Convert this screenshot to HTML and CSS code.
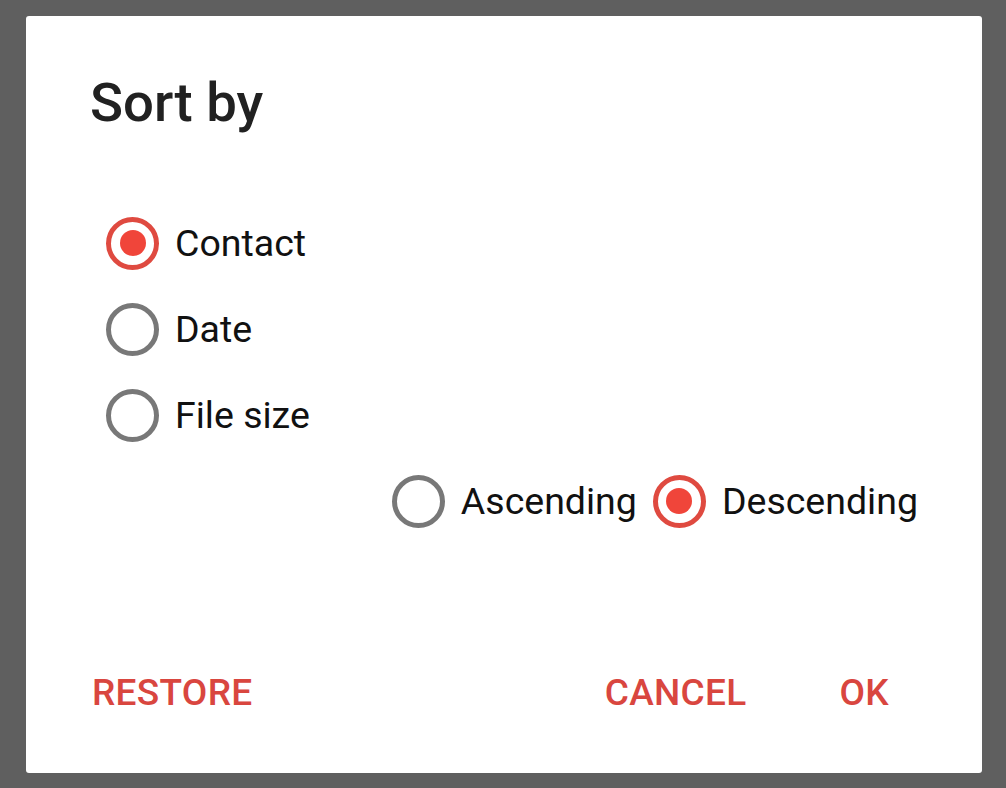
FILE: index.html
```html
<!DOCTYPE html>
<html lang="en">
<head>
    <meta charset="UTF-8">
    <meta name="viewport" content="width=device-width, initial-scale=1.0">
    <title>Sort by</title>
    <link rel="stylesheet" href="styles.css">
</head>
<body>
    <!-- Sort dialog -->
    <div class="dialog">
        <h2 class="dialog-title">Sort by</h2>

        <div class="sort-options">
            <label class="radio-row">
                <span class="radio checked"></span>
                <span class="radio-label">Contact</span>
            </label>
            <label class="radio-row">
                <span class="radio"></span>
                <span class="radio-label">Date</span>
            </label>
            <label class="radio-row">
                <span class="radio"></span>
                <span class="radio-label">File size</span>
            </label>
        </div>

        <div class="sort-order">
            <label class="radio-row">
                <span class="radio"></span>
                <span class="radio-label">Ascending</span>
            </label>
            <label class="radio-row">
                <span class="radio checked"></span>
                <span class="radio-label">Descending</span>
            </label>
        </div>

        <div class="dialog-actions">
            <button class="text-button">Restore</button>
            <div class="actions-right">
                <button class="text-button">Cancel</button>
                <button class="text-button">OK</button>
            </div>
        </div>
    </div>
</body>
</html>
```

FILE: styles.css
```css
body {
    font-family: Roboto, "Noto Sans", Arial, sans-serif;
    margin: 0;
    height: 100vh;
    background-color: #5f5f5f;
    padding: 16px 24px 15px 26px;
    box-sizing: border-box;
}
.dialog {
    background-color: #fff;
    border-radius: 3px;
    height: 757px;
    box-sizing: border-box;
    padding-top: 56px;
    display: flex;
    flex-direction: column;
}
.dialog-title {
    margin: 0;
    padding-left: 64px;
    font-size: 54.5px;
    line-height: 60px;
    font-weight: 500;
    color: #212121;
}
.sort-options {
    margin-top: 68px;
    padding-left: 80px;
    display: flex;
    flex-direction: column;
}
.radio-row {
    height: 86px;
    display: flex;
    align-items: center;
    gap: 16px;
    font-size: 37.5px;
    color: #111;
}
.radio {
    width: 53px;
    height: 53px;
    border: 5px solid #787878;
    border-radius: 50%;
    box-sizing: border-box;
    display: flex;
    align-items: center;
    justify-content: center;
}
.radio.checked {
    border-color: #df4a40;
}
.radio.checked::after {
    content: '';
    width: 26px;
    height: 26px;
    border-radius: 50%;
    background-color: #f0453a;
}
.sort-order {
    display: flex;
    justify-content: flex-end;
    gap: 16px;
    padding-right: 64px;
}
.dialog-actions {
    margin-top: 112px;
    height: 72px;
    display: flex;
    align-items: center;
    justify-content: space-between;
    padding: 0 93px 0 66px;
}
.actions-right {
    display: flex;
    gap: 93px;
}
.text-button {
    font-family: inherit;
    font-size: 37px;
    letter-spacing: 0.3px;
    font-weight: 500;
    text-transform: uppercase;
    color: #d9463f;
    background: none;
    border: none;
    padding: 0;
    cursor: pointer;
}
```
